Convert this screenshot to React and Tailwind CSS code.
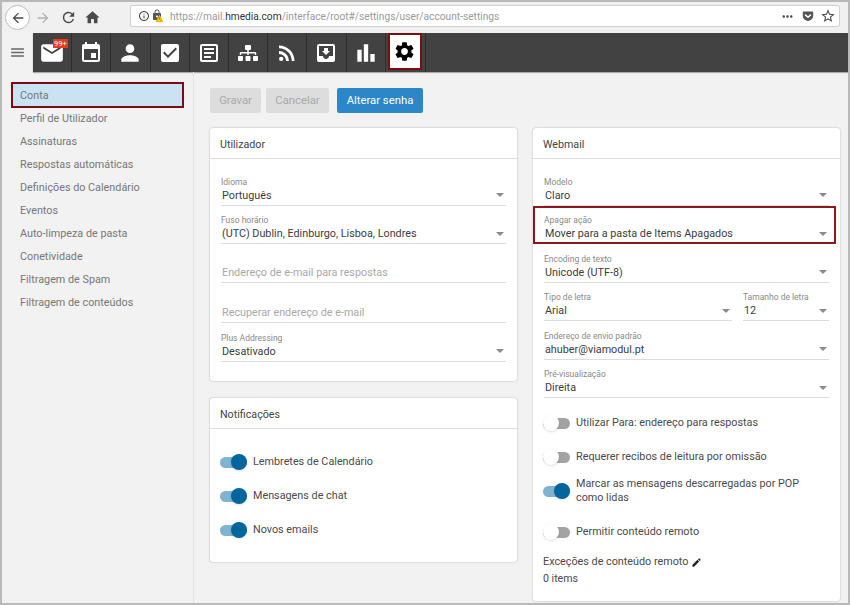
import React from "react";
import {
  MdArrowBack,
  MdArrowForward,
  MdBarChart,
  MdCheckBox,
  MdEdit,
  MdEmail,
  MdEvent,
  MdHome,
  MdInfoOutline,
  MdLock,
  MdMenu,
  MdMoveToInbox,
  MdMoreHoriz,
  MdOutlineArticle,
  MdOutlineStarBorder,
  MdPerson,
  MdRefresh,
  MdRssFeed,
  MdSettings,
  MdWarning,
} from "react-icons/md";
import { FaGetPocket, FaSitemap } from "react-icons/fa";

const menu = [
  "Conta",
  "Perfil de Utilizador",
  "Assinaturas",
  "Respostas automáticas",
  "Definições do Calendário",
  "Eventos",
  "Auto-limpeza de pasta",
  "Conetividade",
  "Filtragem de Spam",
  "Filtragem de conteúdos",
];

const tabs = [
  { icon: <MdEmail size={26} />, badge: true },
  { icon: <MdEvent size={24} /> },
  { icon: <MdPerson size={26} /> },
  { icon: <MdCheckBox size={24} /> },
  { icon: <MdOutlineArticle size={24} /> },
  { icon: <FaSitemap size={20} /> },
  { icon: <MdRssFeed size={24} /> },
  { icon: <MdMoveToInbox size={24} /> },
  { icon: <MdBarChart size={26} /> },
];

const Caret = () => (
  <span className="w-0 h-0 mb-0.5 border-x-4 border-x-transparent border-t-[4px] border-t-[#8a8a8a]" />
);

const Field = ({ label, value, placeholder, className = "" }) => (
  <div className={`h-[38.5px] flex flex-col justify-end ${className}`}>
    {label && <div className="text-[8.5px] leading-[11px] text-[#8a8a8a]">{label}</div>}
    <div className="h-[18px] flex items-center justify-between border-b border-[#dcdcdc] pl-px pr-0.5 text-[10.8px]">
      {placeholder ? (
        <span className="text-[#a8a8a8]">{placeholder}</span>
      ) : (
        <span className="text-[#3c3c3c]">{value}</span>
      )}
      {!placeholder && <Caret />}
    </div>
  </div>
);

const Toggle = ({ on }) => (
  <span className="relative block w-[27px] h-[10px] shrink-0 mr-[6px]">
    <span
      className={`absolute left-0 right-0 top-0 h-[11px] rounded-full ${
        on ? "bg-[#7fb3d0]" : "bg-[#a3a3a3]"
      }`}
    />
    <span
      className={`absolute top-[-3px] w-[16px] h-[16px] rounded-full shadow ${
        on ? "right-0 bg-[#02659c]" : "left-0 bg-white"
      }`}
    />
  </span>
);

const ToggleRow = ({ on, children, className = "" }) => (
  <div className={`flex items-center text-[10.8px] leading-[14px] text-[#4a4a4a] ${className}`}>
    <Toggle on={on} />
    <span>{children}</span>
  </div>
);

const Card = ({ title, children, className = "" }) => (
  <section className={`bg-white rounded-[3px] shadow-[0_0_2px_rgba(0,0,0,0.3)] ${className}`}>
    <h2 className="h-[31px] pt-[4px] flex items-center px-[10px] border-b border-[#dedede] text-[10.7px] text-[#444]">
      {title}
    </h2>
    {children}
  </section>
);

export default function App() {
  return (
    <div
      className="w-[850px] h-[605px] overflow-hidden flex flex-col border-t-2 border-x-2 border-b-2 border-[#b9b9b9] bg-[#f2f2f2]"
      style={{ fontFamily: "Roboto, sans-serif" }}
    >
      {/* browser toolbar */}
      <div className="h-[31px] shrink-0 flex items-center bg-[#f0f0f0] pl-[3px] text-[#4a4a4a]">
        <span className="w-[25px] h-[25px] rounded-full border border-[#bdbdbd] bg-white flex items-center justify-center">
          <MdArrowBack size={16} />
        </span>
        <MdArrowForward size={16} className="ml-[5px] text-[#b0b0b0]" />
        <MdRefresh size={17} className="ml-[9px]" />
        <MdHome size={17} className="ml-[7px]" />
        <div className="ml-[29px] mb-[3px] w-[710px] h-[22px] flex items-center bg-white border border-[#d0d0d0] rounded-[2px] pl-[7px] pr-[3px]">
          <MdInfoOutline size={12} />
          <span className="relative w-[13px] h-[14px] ml-[1px]">
            <MdLock size={12} className="text-[#555]" />
            <MdWarning size={9} className="absolute right-0 bottom-0 text-[#f2b600]" />
          </span>
          <span className="ml-[6px] pt-px text-[10.2px] text-[#9a9a9a]">
            https://mail.<span className="text-[#333]">hmedia.com</span>/interface/root#/settings/user/account-settings
          </span>
          <MdMoreHoriz size={15} className="ml-auto" />
          <FaGetPocket size={12} className="ml-[7px] text-[#555]" />
          <MdOutlineStarBorder size={16} className="ml-[6px]" />
        </div>
      </div>

      {/* app bar */}
      <div className="h-[39px] shrink-0 flex">
        <div className="w-[31px] flex items-center justify-center text-[#666]">
          <MdMenu size={17} />
        </div>
        <div className="flex-1 flex bg-[#424242] shadow-[0_1px_1px_rgba(0,0,0,0.3)]">
          {tabs.map((t, i) => (
            <div
              key={i}
              className="relative w-[39.2px] flex items-center justify-center text-white border-r border-[#2e2e2e]"
            >
              {t.icon}
              {t.badge && (
                <span className="absolute left-[20px] top-[6px] h-[9px] px-[1px] bg-[#e23e1a] text-[7.5px] leading-[9px] text-white">
                  99+
                </span>
              )}
            </div>
          ))}
          <div className="ml-[2px] w-[34px] h-[37px] bg-white border-2 border-[#7a0c14] flex items-center justify-center text-black">
            <MdSettings size={23} />
          </div>
          <div className="ml-[3px] w-px bg-[#2e2e2e]" />
        </div>
      </div>

      <div className="flex-1 flex min-h-0">
        {/* sidebar */}
        <aside className="w-[192px] shrink-0 border-r border-[#e2e2e2] px-[9px] pt-[10px]">
          {menu.map((m, i) => (
            <div
              key={m}
              className={`flex items-center pt-[2px] text-[10.8px] text-[#777] ${
                i === 0
                  ? "h-[26px] mb-[-1px] pl-[7px] bg-[#c9e3f3] border-2 border-[#7a0c14] text-[#6b7177]"
                  : "h-[23px] pl-[9px]"
              }`}
            >
              {m}
            </div>
          ))}
        </aside>

        {/* main */}
        <main className="flex-1 pl-[16px] pr-[8px] pt-[16px]">
          <div className="flex text-[11.3px] h-[25px]">
            <button className="w-[51px] pt-px bg-[#dddddd] text-[#a9a9a9] rounded-[2px]">Gravar</button>
            <button className="w-[63px] pt-px ml-[5px] bg-[#dddddd] text-[#a9a9a9] rounded-[2px]">Cancelar</button>
            <button className="w-[86px] pt-px ml-[8px] bg-[#2b87c8] text-white rounded-[2px]">Alterar senha</button>
          </div>

          <div className="mt-[15px] flex gap-[16px] items-start">
            <div className="w-[307px]">
              <Card title="Utilizador" className="h-[253px]">
                <div className="px-[11px] pt-[8px]">
                  <Field label="Idioma" value="Português" />
                  <Field label="Fuso horário" value="(UTC) Dublin, Edinburgo, Lisboa, Londres" />
                  <Field placeholder="Endereço de e-mail para respostas" />
                  <Field placeholder="Recuperar endereço de e-mail" className="mt-[2px]" />
                  <Field label="Plus Addressing" value="Desativado" />
                </div>
              </Card>
              <Card title="Notificações" className="h-[164px] mt-[17px]">
                <div className="pl-[10px] pt-[26px] flex flex-col gap-[20px]">
                  <ToggleRow on>Lembretes de Calendário</ToggleRow>
                  <ToggleRow on>Mensagens de chat</ToggleRow>
                  <ToggleRow on>Novos emails</ToggleRow>
                </div>
              </Card>
            </div>

            <Card title="Webmail" className="w-[307px] h-[473px]">
              <div className="px-[11px] pt-[8px]">
                <Field label="Modelo" value="Claro" />
                <div className="relative">
                  <Field label="Apagar ação" value="Mover para a pasta de Items Apagados" />
                  <div className="absolute left-[-11px] right-[-7px] top-0 bottom-0 border-2 border-[#8b1a20]" />
                </div>
                <Field label="Encoding de texto" value="Unicode (UTF-8)" />
                <div className="flex gap-[11px]">
                  <Field label="Tipo de letra" value="Arial" className="w-[188px]" />
                  <Field label="Tamanho de letra" value="12" className="flex-1" />
                </div>
                <Field label="Endereço de envio padrão" value="ahuber@viamodul.pt" />
                <Field label="Pré-visualização" value="Direita" />
              </div>
              <div className="pl-[10px] pr-[30px] pt-[18px]">
                <ToggleRow>Utilizar Para: endereço para respostas</ToggleRow>
                <ToggleRow className="mt-[20px]">Requerer recibos de leitura por omissão</ToggleRow>
                <ToggleRow on className="mt-[13px]">
                  Marcar as mensagens descarregadas por POP como lidas
                </ToggleRow>
                <ToggleRow className="mt-[20px]">Permitir conteúdo remoto</ToggleRow>
                <div className="mt-[15px] flex items-center text-[10.8px] text-[#4a4a4a]">
                  Exceções de conteúdo remoto
                  <MdEdit size={11} className="ml-[3px] text-[#222]" />
                </div>
                <div className="mt-[1px] text-[10.6px] text-[#4a4a4a]">0 items</div>
              </div>
            </Card>
          </div>
        </main>
      </div>
    </div>
  );
}
